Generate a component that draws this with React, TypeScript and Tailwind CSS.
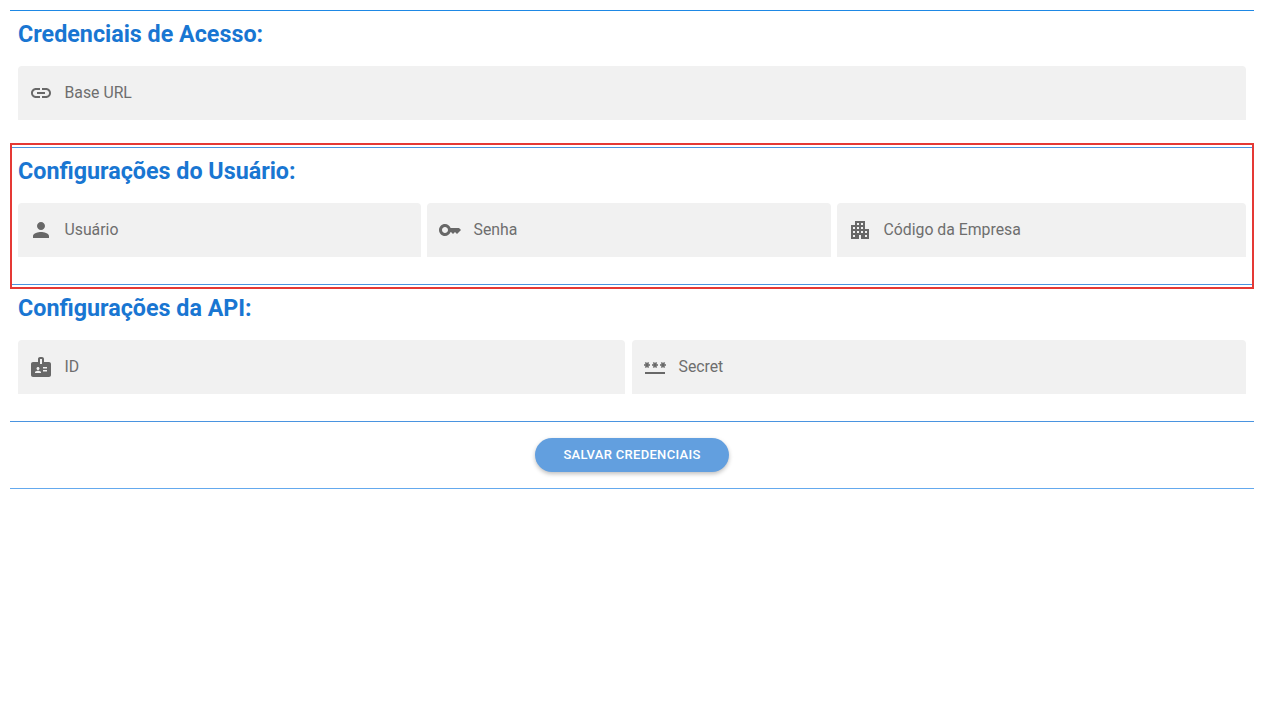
const ICONS = {
  link: "M3.9 12c0-1.71 1.39-3.1 3.1-3.1h4V7H7c-2.76 0-5 2.24-5 5s2.24 5 5 5h4v-1.9H7c-1.71 0-3.1-1.39-3.1-3.1zM8 13h8v-2H8v2zm9-6h-4v1.9h4c1.71 0 3.1 1.39 3.1 3.1s-1.39 3.1-3.1 3.1h-4V17h4c2.76 0 5-2.24 5-5s-2.24-5-5-5z",
  person: "M12 12c2.21 0 4-1.79 4-4s-1.79-4-4-4-4 1.79-4 4 1.79 4 4 4zm0 2c-2.67 0-8 1.34-8 4v2h16v-2c0-2.66-5.33-4-8-4z",
  key: "M21 10h-8.35C11.83 7.67 9.61 6 7 6c-3.31 0-6 2.69-6 6s2.69 6 6 6c2.61 0 4.83-1.67 5.65-4H13l2 2 2-2 2 2 4-4.04L21 10zM7 15c-1.65 0-3-1.35-3-3s1.35-3 3-3 3 1.35 3 3-1.35 3-3 3z",
  apartment: "M17 11V3H7v4H3v14h8v-4h2v4h8V11h-4zM7 19H5v-2h2v2zm0-4H5v-2h2v2zm0-4H5V9h2v2zm4 4H9v-2h2v2zm0-4H9V9h2v2zm0-4H9V5h2v2zm4 8h-2v-2h2v2zm0-4h-2V9h2v2zm0-4h-2V5h2v2zm4 12h-2v-2h2v2zm0-4h-2v-2h2v2z",
  badge: "M20 7h-5V4c0-1.1-.9-2-2-2h-2c-1.1 0-2 .9-2 2v3H4c-1.1 0-2 .9-2 2v11c0 1.1.9 2 2 2h16c1.1 0 2-.9 2-2V9c0-1.1-.9-2-2-2zM9 12c.83 0 1.5.67 1.5 1.5S9.83 15 9 15s-1.5-.67-1.5-1.5S8.17 12 9 12zm3 6H6v-.75c0-1 2-1.5 3-1.5s3 .5 3 1.5V18zm1-9h-2V4h2v5zm5 7.5h-4V15h4v1.5zm0-3h-4V12h4v1.5z",
  password: "M2 17h20v2H2v-2zm1.15-4.05L4 11.47l.85 1.48 1.3-.75-.85-1.48H7v-1.5H5.3l.85-1.47L4.85 7 4 8.47 3.15 7l-1.3.75.85 1.47H1v1.5h1.7l-.85 1.48 1.3.75zm6.7-.75 1.3.75.85-1.48.85 1.48 1.3-.75-.85-1.48H15v-1.5h-1.7l.85-1.47-1.3-.75L12 8.47 11.15 7l-1.3.75.85 1.47H9v1.5h1.7l-.85 1.48zM23 9.22h-1.7l.85-1.47-1.3-.75L20 8.47 19.15 7l-1.3.75.85 1.47H17v1.5h1.7l-.85 1.48 1.3.75.85-1.48.85 1.48 1.3-.75-.85-1.48H23v-1.5z",
};

type FieldProps = {
  icon: keyof typeof ICONS;
  label: string;
};

function Field({ icon, label }: FieldProps) {
  return (
    <div className="flex h-[54px] items-center gap-[11.5px] rounded-t bg-[#f1f1f1] pl-[11px]">
      <svg viewBox="0 0 24 24" className="h-6 w-6 shrink-0 fill-[#686868]">
        <path d={ICONS[icon]} />
      </svg>
      <span className="text-[15.8px] text-[#6e6e6e]">{label}</span>
    </div>
  );
}

function Section({ title, children }: { title: string; children: React.ReactNode }) {
  return (
    <div className="h-[136px] px-2">
      <h2 className="pt-[8px] text-[23.3px] leading-[30px] font-bold text-[#1976d2]">{title}</h2>
      <div className="mt-[17px]">{children}</div>
    </div>
  );
}

export default function App() {
  return (
    <div className="min-h-[712px] bg-white px-[10px] pt-[10px] font-['Roboto',sans-serif]">
      <hr className="border-t border-[#1e88e5]" />
      <Section title="Credenciais de Acesso:">
        <Field icon="link" label="Base URL" />
      </Section>

      {/* highlighted section */}
      <div className="relative">
        <hr className="border-t border-[#4a94e0]" />
        <Section title="Configurações do Usuário:">
          <div className="grid grid-cols-[403px_404px_1fr] gap-[6px]">
            <Field icon="person" label="Usuário" />
            <Field icon="key" label="Senha" />
            <Field icon="apartment" label="Código da Empresa" />
          </div>
        </Section>
        <hr className="border-t border-[#4a94e0]" />
        <div className="pointer-events-none absolute -top-[4px] right-0 -bottom-[4px] left-0 border-2 border-[#e53935]" />
      </div>

      <Section title="Configurações da API:">
        <div className="grid grid-cols-[607px_1fr] gap-[7px]">
          <Field icon="badge" label="ID" />
          <Field icon="password" label="Secret" />
        </div>
      </Section>

      <hr className="border-t border-[#4a94e0]" />
      <div className="flex justify-center py-4">
        <button className="h-[34px] w-[194px] rounded-full bg-[#629fdf] text-[13px] font-medium tracking-[0.3px] text-white uppercase shadow-[0_2px_4px_rgba(0,0,0,0.25)]">
          Salvar Credenciais
        </button>
      </div>
      <hr className="border-t border-[#64a9ee]" />
    </div>
  );
}
